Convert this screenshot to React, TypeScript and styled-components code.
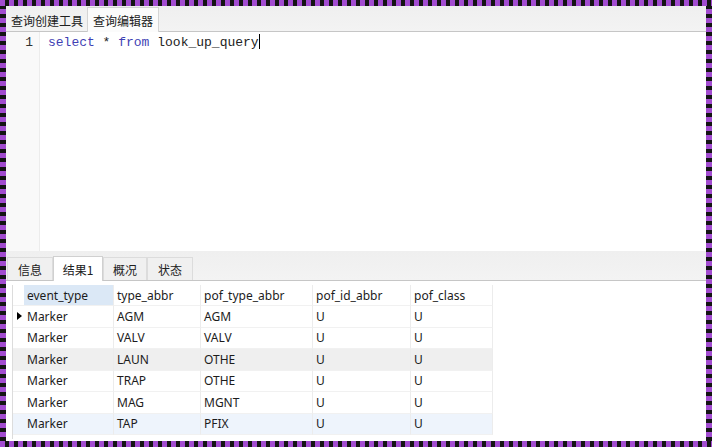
import React from 'react'
import styled, { createGlobalStyle } from 'styled-components'

const GlobalStyle = createGlobalStyle`
  html, body {
    margin: 0;
    padding: 0;
    background: #ffffff;
  }
  * {
    box-sizing: border-box;
  }
`

const PURPLE = '#a24cd0'
const DARK = '#141414'

const Frame = styled.div`
  width: 712px;
  height: 447px;
  padding: 6px;
  display: flex;
  flex-direction: column;
  background:
    repeating-linear-gradient(90deg, ${PURPLE} 0 5px, ${DARK} 5px 9px) top left / 100% 6px no-repeat,
    repeating-linear-gradient(90deg, ${PURPLE} 0 5px, ${DARK} 5px 9px) bottom left / 100% 6px no-repeat,
    repeating-linear-gradient(180deg, ${PURPLE} 0 5px, ${DARK} 5px 9px) top left / 6px 100% no-repeat,
    repeating-linear-gradient(180deg, ${PURPLE} 0 5px, ${DARK} 5px 9px) top right / 6px 100% no-repeat;
`

const Window = styled.div`
  flex: 1;
  display: flex;
  flex-direction: column;
  background: #ffffff;
  overflow: hidden;
  font-family: 'Noto Sans', 'Noto Sans CJK SC', sans-serif;
  color: #1e1e1e;
`

const TabStrip = styled.div<{ $height: number }>`
  height: ${(p) => p.$height}px;
  flex: none;
  display: flex;
  align-items: flex-end;
  padding-left: 1px;
  background: linear-gradient(#efefef, #f3f3f3);
  border-bottom: 1px solid #c6c6c6;
`

const Tab = styled.div<{ $active?: boolean; $width: number }>`
  width: ${(p) => p.$width}px;
  height: ${(p) => (p.$active ? 25 : 23)}px;
  display: flex;
  align-items: center;
  justify-content: center;
  font-family: 'Noto Sans CJK SC', 'Noto Sans', sans-serif;
  font-size: 12px;
  color: #202020;
  background: ${(p) => (p.$active ? '#fbfbfb' : 'transparent')};
  border: 1px solid ${(p) => (p.$active ? '#d4d4d4' : 'transparent')};
  border-bottom: none;
  margin-bottom: ${(p) => (p.$active ? -1 : 0)}px;
`

const ResultTab = styled(Tab)`
  background: ${(p) => (p.$active ? '#ffffff' : '#f0f0f0')};
  border-color: ${(p) => (p.$active ? '#d0d0d0' : '#dcdcdc')};
`

const Editor = styled.div`
  height: 219px;
  flex: none;
  display: flex;
`

const Gutter = styled.div`
  width: 34px;
  flex: none;
  background: #f9f9f9;
  border-right: 1px solid #ececec;
  padding: 3px 6px 0 0;
  text-align: right;
  font-family: 'Liberation Mono', monospace;
  font-size: 13px;
  line-height: 16px;
  color: #333333;
`

const Code = styled.div`
  flex: 1;
  padding: 2px 0 0 8px;
  font-family: 'Liberation Mono', monospace;
  font-size: 13px;
  line-height: 16px;
  color: #222222;
  white-space: pre;
`

const Keyword = styled.span`
  color: #3f3fb4;
`

const Caret = styled.span`
  display: inline-block;
  width: 1px;
  height: 15px;
  background: #000000;
  vertical-align: -3px;
`

const GridArea = styled.div`
  flex: 1;
  padding: 4px 0 0 6px;
`

const Grid = styled.div`
  width: 481px;
  border-left: 1px solid #dcdcdc;
  padding-bottom: 4px;
`

const Row = styled.div<{ $bg?: string; $height: number }>`
  display: flex;
  height: ${(p) => p.$height}px;
  background: ${(p) => p.$bg || '#ffffff'};
`

const Cell = styled.div<{ $width: number; $bg?: string }>`
  width: ${(p) => p.$width}px;
  flex: none;
  display: flex;
  align-items: center;
  padding-left: 3px;
  font-size: 12px;
  color: #1c1c1c;
  background: ${(p) => p.$bg || 'transparent'};
  border-right: 1px solid #ececec;
  border-bottom: 1px solid #f1f1f1;
  white-space: nowrap;
  overflow: hidden;
`

const Marker = styled.div`
  width: 11px;
  flex: none;
  display: flex;
  align-items: center;
  justify-content: center;
  border-bottom: 1px solid #f1f1f1;
`

const Arrow = styled.span`
  width: 0;
  height: 0;
  border-top: 4.5px solid transparent;
  border-bottom: 4.5px solid transparent;
  border-left: 5px solid #000000;
  margin-left: 1px;
`

const columns = [
  { key: 'event_type', width: 90 },
  { key: 'type_abbr', width: 87 },
  { key: 'pof_type_abbr', width: 112 },
  { key: 'pof_id_abbr', width: 98 },
  { key: 'pof_class', width: 82 },
]

const rows = [
  ['Marker', 'AGM', 'AGM', 'U', 'U'],
  ['Marker', 'VALV', 'VALV', 'U', 'U'],
  ['Marker', 'LAUN', 'OTHE', 'U', 'U'],
  ['Marker', 'TRAP', 'OTHE', 'U', 'U'],
  ['Marker', 'MAG', 'MGNT', 'U', 'U'],
  ['Marker', 'TAP', 'PFIX', 'U', 'U'],
]

const rowBg = (i: number) => {
  if (i === 2) return '#efefef'
  if (i === 5) return '#eef4fc'
  return '#ffffff'
}

const App = () => {
  return (
    <>
      <GlobalStyle />
      <Frame>
        <Window>
          <TabStrip $height={26}>
            <Tab $width={80}>查询创建工具</Tab>
            <Tab $width={72} $active>
              查询编辑器
            </Tab>
          </TabStrip>
          <Editor>
            <Gutter>1</Gutter>
            <Code>
              <Keyword>select</Keyword> * <Keyword>from</Keyword> look_up_query
              <Caret />
            </Code>
          </Editor>
          <TabStrip $height={30}>
            <ResultTab $width={46}>信息</ResultTab>
            <ResultTab $width={50} $active>
              结果1
            </ResultTab>
            <ResultTab $width={44}>概况</ResultTab>
            <ResultTab $width={46}>状态</ResultTab>
          </TabStrip>
          <GridArea>
            <Grid>
              <Row $height={21}>
                <Marker />
                {columns.map((c, i) => (
                  <Cell key={c.key} $width={c.width} $bg={i === 0 ? '#dbe8f6' : undefined}>
                    {c.key}
                  </Cell>
                ))}
              </Row>
              {rows.map((r, i) => (
                <Row key={i} $height={21.5} $bg={rowBg(i)}>
                  <Marker>{i === 0 && <Arrow />}</Marker>
                  {r.map((v, j) => (
                    <Cell key={j} $width={columns[j].width}>
                      {v}
                    </Cell>
                  ))}
                </Row>
              ))}
            </Grid>
          </GridArea>
        </Window>
      </Frame>
    </>
  )
}

export default App
